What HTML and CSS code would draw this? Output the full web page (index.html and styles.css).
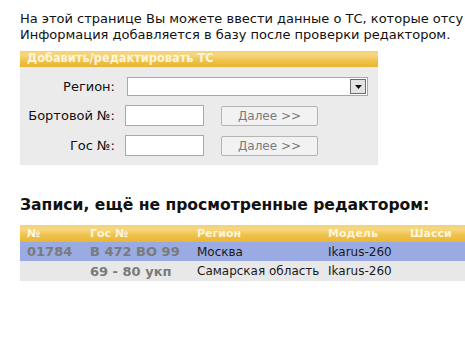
FILE: index.html
```html
<!DOCTYPE html>
<html>
<head>
<meta charset="utf-8">
<link rel="stylesheet" href="styles.css">
</head>
<body>
<div class="page">
  <p class="intro">На этой странице Вы можете ввести данные о ТС, которые отсу<br>Информация добавляется в базу после проверки редактором.</p>

  <div class="form-box">
    <div class="box-head">Добавить/редактировать ТС</div>
    <div class="box-body">
      <div class="row">
        <span class="label">Регион:</span>
        <div class="select"><span class="select-btn"><svg width="7" height="4" viewBox="0 0 7 4"><path d="M0 0H7L3.5 4Z" fill="#111"/></svg></span></div>
      </div>
      <div class="row">
        <span class="label">Бортовой №:</span>
        <span class="input"></span>
        <span class="btn">Далее &gt;&gt;</span>
      </div>
      <div class="row">
        <span class="label">Гос №:</span>
        <span class="input"></span>
        <span class="btn">Далее &gt;&gt;</span>
      </div>
    </div>
  </div>

  <h2 class="title">Записи, ещё не просмотренные редактором:</h2>

  <div class="table">
    <div class="trow thead">
      <span class="c1">№</span><span class="c2">Гос №</span><span class="c3">Регион</span><span class="c4">Модель</span><span class="c5">Шасси</span>
    </div>
    <div class="trow r1">
      <span class="c1 strong">01784</span><span class="c2 strong">B 472 BO 99</span><span class="c3">Москва</span><span class="c4">Ikarus-260</span><span class="c5"></span>
    </div>
    <div class="trow r2">
      <span class="c1 strong"></span><span class="c2 strong">69 - 80 укп</span><span class="c3">Самарская область</span><span class="c4">Ikarus-260</span><span class="c5"></span>
    </div>
  </div>
</div>
</body>
</html>
```

FILE: styles.css
```css
html, body {
  margin: 0;
  padding: 0;
  overflow: hidden;
  background: #fff;
}
body {
  font-family: "DejaVu Sans", Verdana, sans-serif;
  color: #111;
  width: 465px;
}
.page {
  padding: 11px 0 0 20px;
}
.intro {
  margin: 0;
  font-size: 13px;
  line-height: 16px;
  white-space: nowrap;
  color: #111;
}
.form-box {
  margin-top: 8px;
  width: 358px;
}
.box-head {
  height: 16px;
  line-height: 15px;
  font-size: 11.4px;
  font-weight: bold;
  color: #fff6dc;
  padding-left: 7px;
  background: linear-gradient(#f3d27c 0%, #f6d67f 25%, #efc24c 60%, #e9b532 100%);
}
.box-body {
  background: #ebebeb;
  padding: 10px 0 9px;
  display: flex;
  flex-direction: column;
  gap: 9px;
}
.row {
  display: flex;
  align-items: center;
}
.label {
  width: 95px;
  text-align: right;
  font-size: 13px;
  color: #111;
  margin-right: 10px;
}
.select {
  margin-left: 2px;
  width: 239px;
  height: 17px;
  background: #fff;
  border: 1px solid #a9a9a9;
  display: flex;
  justify-content: flex-end;
}
.select-btn {
  width: 14px;
  height: 13px;
  margin: 1px;
  background: #e4e4e4;
  border: 1px solid #6e6e6e;
  display: flex;
  align-items: center;
  justify-content: center;
}
.input {
  width: 77px;
  height: 19px;
  background: #fff;
  border: 1px solid #a9a9a9;
}
.btn {
  margin-left: 17px;
  width: 95px;
  height: 18px;
  border: 1px solid #b4b4b4;
  border-radius: 2px;
  background: #f2f2f2;
  color: #7a7a7a;
  font-size: 12px;
  line-height: 18px;
  text-align: center;
}
.title {
  margin: 30px 0 0;
  font-size: 15.6px;
  line-height: 20px;
  font-weight: bold;
  color: #111;
  white-space: nowrap;
}
.table {
  margin-top: 10px;
  width: 460px;
}
.trow {
  display: flex;
  align-items: center;
  white-space: nowrap;
}
.trow span {
  padding-left: 7px;
  box-sizing: border-box;
}
.c1 { width: 63px; }
.c2 { width: 107px; }
.c3 { width: 131px; }
.c4 { width: 82px; }
.c5 { width: 77px; }
.thead {
  height: 17px;
  font-size: 11px;
  font-weight: bold;
  color: #fff6dc;
  background: linear-gradient(#f3d27c 0%, #f6d67f 25%, #efc24c 60%, #e9b532 100%);
}
.r1 {
  height: 19px;
  background: #9aabe3;
  font-size: 12px;
  color: #1a1a1a;
}
.r2 {
  height: 20px;
  background: #e8e8e8;
  font-size: 12px;
  color: #1a1a1a;
}
.strong {
  font-weight: bold;
  font-size: 13px;
  color: #7a7a7a;
}
```
